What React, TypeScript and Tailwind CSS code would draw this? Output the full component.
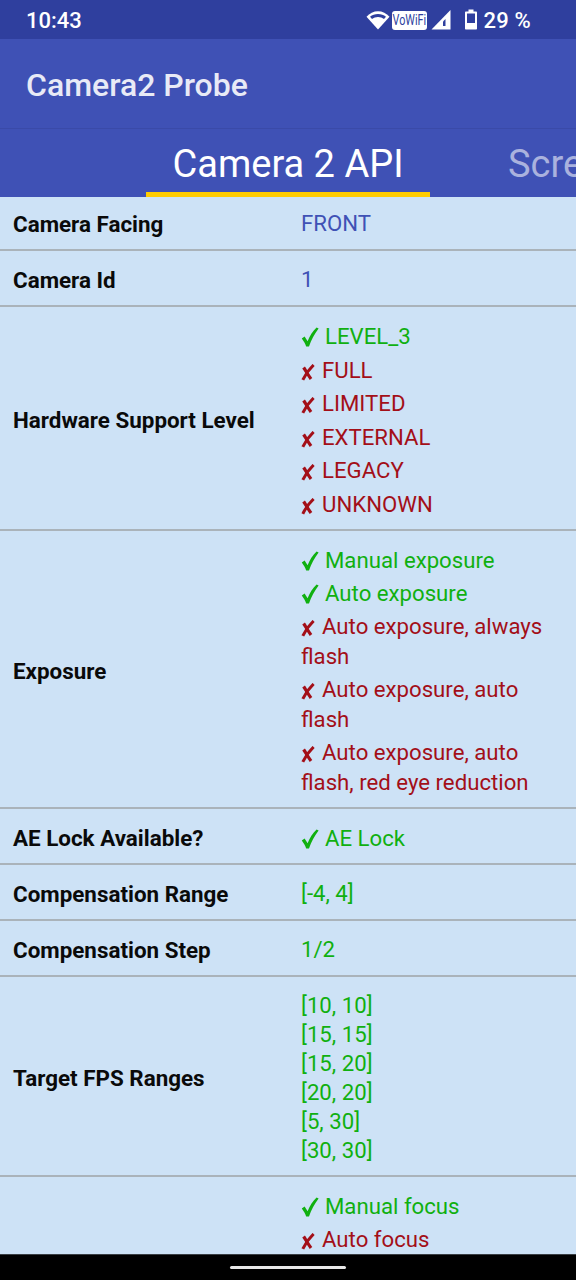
const font = { fontFamily: "Roboto, sans-serif" };

type Item = { ok: boolean; text: string };

const hardware: Item[] = [
  { ok: true, text: "LEVEL_3" },
  { ok: false, text: "FULL" },
  { ok: false, text: "LIMITED" },
  { ok: false, text: "EXTERNAL" },
  { ok: false, text: "LEGACY" },
  { ok: false, text: "UNKNOWN" },
];

const exposure: Item[] = [
  { ok: true, text: "Manual exposure" },
  { ok: true, text: "Auto exposure" },
  { ok: false, text: "Auto exposure, always flash" },
  { ok: false, text: "Auto exposure, auto flash" },
  { ok: false, text: "Auto exposure, auto flash, red eye reduction" },
];

const fps = ["[10, 10]", "[15, 15]", "[15, 20]", "[20, 20]", "[5, 30]", "[30, 30]"];

const Check = () => (
  <svg width="18" height="20" viewBox="0 0 18 20" className="mr-[6px] inline-block align-[-3px]">
    <path d="M0.8 11.5 3.6 9.6 6.6 14.2C8.6 9.2 11.6 4.4 15.6 0.6L17.6 1.6C13.4 7 10.4 12.8 8 19.4L5.2 19.4C4.2 16.6 2.6 14 0.8 11.5Z" fill="#10b010" />
  </svg>
);

const Cross = () => (
  <svg width="14" height="17" viewBox="0 0 14 17" className="mr-[7px] inline-block align-[-3px]">
    <path d="M2.6 3.5C4.6 6.5 7.4 11.5 10 15" fill="none" stroke="#a30f18" strokeWidth="3.2" />
    <path d="M12.6 1C8.4 5 4.4 10.5 1.8 15.8" fill="none" stroke="#a30f18" strokeWidth="3" />
  </svg>
);

const Flags = ({ items, gap }: { items: Item[]; gap: string }) => (
  <div className={`-mb-[1px] flex flex-col pt-[1px] ${gap}`}>
    {items.map((item, idx) => (
      <div key={idx} className={`leading-[30px] ${item.ok ? "text-[#10b010]" : "text-[#a30f18]"}`}>
        {item.ok ? <Check /> : <Cross />}
        {item.text}
      </div>
    ))}
  </div>
);

const Row = ({ label, children, top }: { label: string; children: React.ReactNode; top?: string }) => (
  <div className={`flex items-center border-b-2 border-[#aab3ba] pb-[11px] pl-[13px] ${top ?? "pt-[13px]"}`}>
    <div className="-mb-[1px] w-[288px] shrink-0 pt-[1px] text-[22.4px] font-bold leading-[30px] text-[#0a0a0a]">{label}</div>
    <div className="min-w-0 flex-1 pr-[24px] leading-[30px]">{children}</div>
  </div>
);

export default function App() {
  return (
    <div className="relative h-[1280px] w-[576px] overflow-hidden bg-[#cde2f6] text-[22.2px]" style={font}>
      {/* status bar */}
      <div className="flex h-[39px] items-center justify-between bg-[#2f3f9e] pl-[26px] pr-[45px] pt-[2px] text-[22px] font-medium text-white">
        <span>10:43</span>
        <div className="flex items-center">
          <svg width="24" height="20" viewBox="0 0 24 20" className="mb-[2px]">
            <path d="M12 19.5 0.5 6.8C3.6 3.2 7.6 1.2 12 1.2S20.4 3.2 23.5 6.8Z" fill="#fff" />
            <path d="M4 6.8C6.2 5 9 4 12 4S17.8 5 20 6.8L18 9C16.4 7.8 14.2 7 12 7S7.6 7.8 6 9Z" fill="#2f3f9e" />
          </svg>
          <span className="ml-[2px] flex h-[19px] w-[35px] items-center justify-center overflow-hidden rounded-[3px] bg-white text-[15px] font-normal text-[#2f3f9e]">
            <span className="inline-block shrink-0 scale-x-[0.72]">VoWiFi</span>
          </span>
          <svg width="20" height="21" viewBox="0 0 20 21" className="mb-[2px] ml-[4px]">
            <path d="M0.5 20.5 19.5 1V20.5Z" fill="#fff" />
            <path d="M12 12.5 14.5 10V17H12Z" fill="#2f3f9e" />
          </svg>
          <svg width="12" height="21" viewBox="0 0 12 21" className="mb-[2px] ml-[14px]">
            <path d="M3.5 0.5H8.5V2.5H11C11.6 2.5 12 3 12 3.5V19.5C12 20.2 11.6 20.5 11 20.5H1C0.4 20.5 0 20.2 0 19.5V3.5C0 3 0.4 2.5 1 2.5H3.5Z" fill="#fff" />
            <rect x="2" y="4.5" width="8" height="9.5" fill="#2f3f9e" />
          </svg>
          <span className="ml-[7px] tracking-[0.2px]">29 %</span>
        </div>
      </div>

      {/* app bar */}
      <div className="flex h-[89px] items-center bg-[#3f51b5] pl-[26px] pt-[3px] text-[32px] font-medium text-[#e8eaf6]">Camera2 Probe</div>

      {/* tabs */}
      <div className="flex h-[69px] items-end overflow-hidden border-t border-[#3a4aa8] bg-[#3f51b5] pl-[146px]">
        <div className="flex h-full w-[284px] shrink-0 items-center justify-center border-b-[5px] border-[#ffcc00] pt-[8px] text-[38px] text-white">Camera 2 API</div>
        <div className="flex h-full shrink-0 items-center pl-[78px] pt-[3px] text-[38px] text-[#aab2de]">Screen</div>
      </div>

      {/* table */}
      <Row label="Camera Facing" top="pt-[11px]"><span className="text-[#3f51b5]">FRONT</span></Row>
      <Row label="Camera Id"><span className="text-[#3f51b5]">1</span></Row>
      <Row label="Hardware Support Level"><Flags items={hardware} gap="gap-[3.6px]" /></Row>
      <Row label="Exposure"><Flags items={exposure} gap="gap-[3px]" /></Row>
      <Row label="AE Lock Available?"><Flags items={[{ ok: true, text: "AE Lock" }]} gap="gap-[3px]" /></Row>
      <Row label="Compensation Range"><span className="text-[#10b010]">[-4, 4]</span></Row>
      <Row label="Compensation Step"><span className="text-[#10b010]">1/2</span></Row>
      <Row label="Target FPS Ranges">
        <div className="-mb-[1px] pt-[1px] text-[#10b010]">
          {fps.map((f) => (
            <div key={f} className="leading-[29px]">{f}</div>
          ))}
        </div>
      </Row>
      <Row label="">
        <Flags items={[{ ok: true, text: "Manual focus" }, { ok: false, text: "Auto focus" }]} gap="gap-[3px]" />
      </Row>

      {/* nav bar */}
      <div className="absolute bottom-0 left-0 flex h-[26px] w-full items-center justify-center border-t border-[#3a3f44] bg-black">
        <div className="h-[3px] w-[116px] rounded-full bg-[#e8e8e8]" />
      </div>
    </div>
  );
}
